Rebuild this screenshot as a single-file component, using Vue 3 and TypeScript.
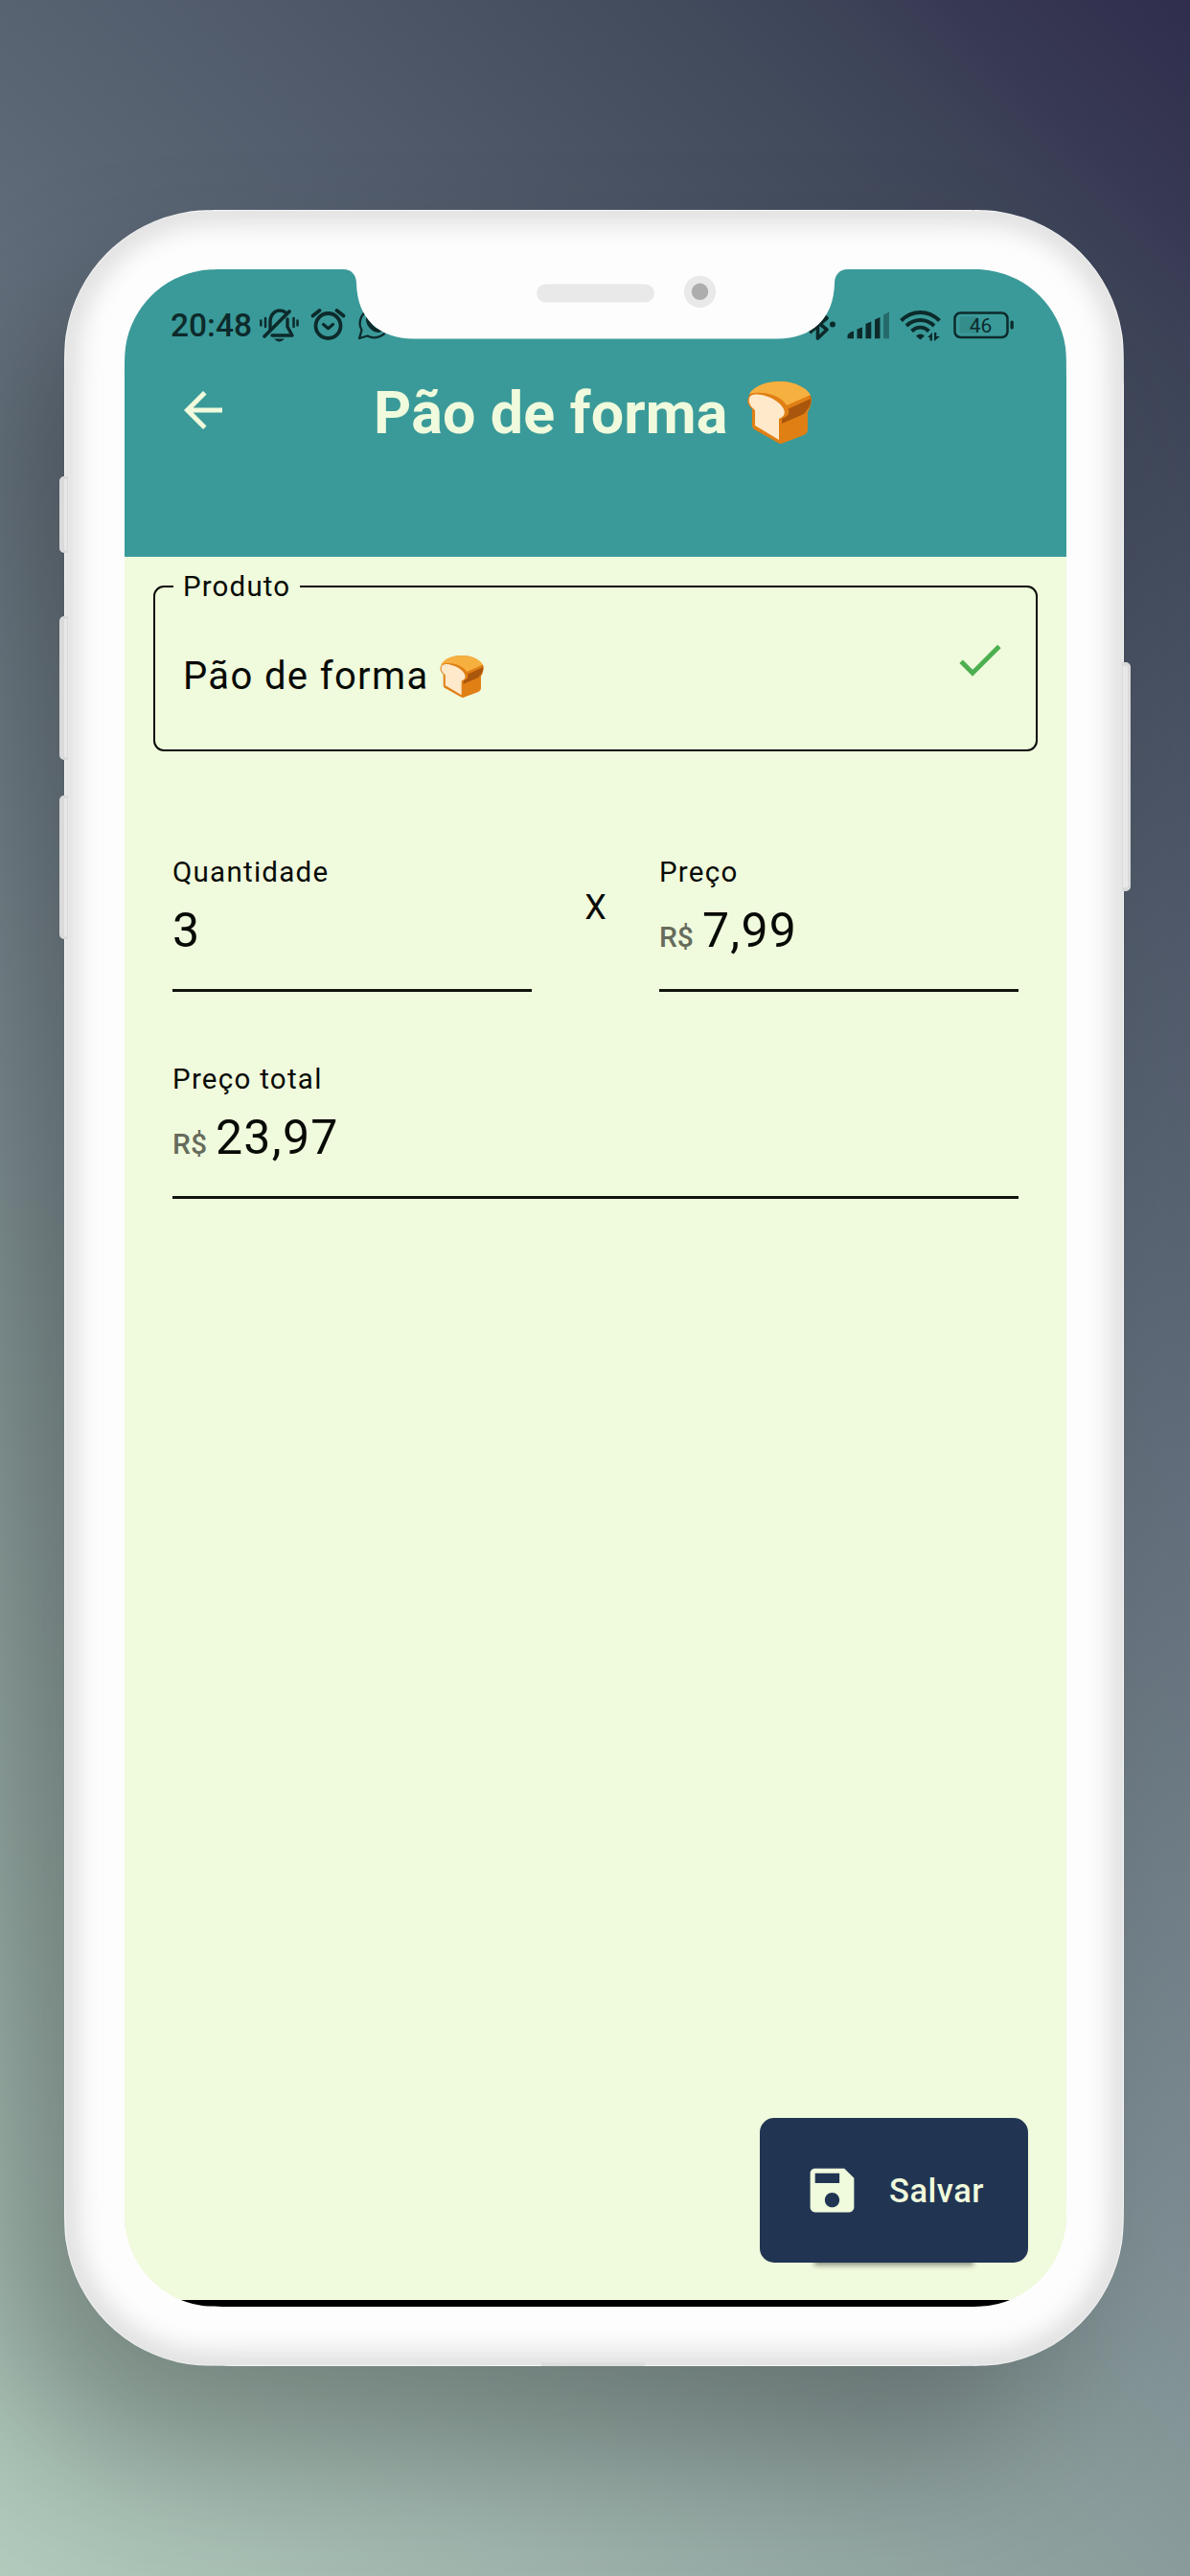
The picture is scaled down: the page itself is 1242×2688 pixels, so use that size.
<script setup lang="ts">
import { computed, ref } from 'vue'

interface Box {
  x: number
  y: number
  w: number
  h: number
}

// Rounded rectangle with smoothed (continuous curvature) corners
function smoothRect({ x, y, w, h }: Box, r: number, s: number): string {
  const rad = Math.PI / 180
  const p = (1 + s) * r
  const arc = Math.sin((45 - 45 * s) * rad) * r * Math.SQRT2
  const c = r * Math.tan((22.5 * s) * rad) * Math.cos(45 * s * rad)
  const d = c * Math.tan(45 * s * rad)
  const b = (p - arc - c - d) / 3
  const a = 2 * b
  return [
    `M${x + p} ${y}H${x + w - p}`,
    `c${a} 0 ${a + b} 0 ${a + b + c} ${d}a${r} ${r} 0 0 1 ${arc} ${arc}c${d} ${c} ${d} ${b + c} ${d} ${a + b + c}`,
    `V${y + h - p}`,
    `c0 ${a} 0 ${a + b} ${-d} ${a + b + c}a${r} ${r} 0 0 1 ${-arc} ${arc}c${-c} ${d} ${-(b + c)} ${d} ${-(a + b + c)} ${d}`,
    `H${x + p}`,
    `c${-a} 0 ${-(a + b)} 0 ${-(a + b + c)} ${-d}a${r} ${r} 0 0 1 ${-arc} ${-arc}c${-d} ${-c} ${-d} ${-(b + c)} ${-d} ${-(a + b + c)}`,
    `V${y + p}`,
    `c0 ${-a} 0 ${-(a + b)} ${d} ${-(a + b + c)}a${r} ${r} 0 0 1 ${arc} ${-arc}c${c} ${-d} ${b + c} ${-d} ${a + b + c} ${-d}Z`,
  ].join('')
}

const bodyPath = smoothRect({ x: 0, y: 0, w: 1106, h: 2250 }, 153, 0.2)
const screenPath = smoothRect({ x: 63, y: 62, w: 983, h: 2126 }, 95, 0.2)

const product = ref('Pão de forma')
const quantity = ref(3)
const price = ref(7.99)
const money = (v: number): string => v.toFixed(2).replace('.', ',')
const total = computed(() => money(quantity.value * price.value))
</script>

<template>
  <div class="stage">
    <svg width="0" height="0" class="defs">
      <symbol id="bread" viewBox="0 0 67 65">
        <path fill="#e07f14" d="M1 17C4 7 18 0 34 0c17 0 29 8 33 17 0 8-2 12-4 15v18c0 3-1 4-4 6L38 64q-3 2-6 0L9 51c-3-1-4-3-4-6V29C1 25-1 21 1 17Z" />
        <path fill="#aa560d" d="M42 27 66 15c1 7 0 11-4 15l-3 4-23 10v-5c5-2 8-4 7-9Z" />
        <path fill="#e07f14" d="M40 25 65 14l1 4-24 11Z" />
        <path fill="#f6b040" d="M2 13C8 4 20 0 34 0c16 0 28 7 32 14L41 25C36 16 19 9 2 13Z" />
        <path fill="#ffe9cb" d="M2 18c1-5 7-5 13-4 10 2 20 8 23 15 2 5 0 8-5 10v22L8 46V30C3 26 1 22 2 18Z" />
      </symbol>
    </svg>

    <div class="phone">
      <i class="key key-a"></i>
      <i class="key key-b"></i>
      <i class="key key-c"></i>
      <i class="key key-d"></i>

      <main class="screen">
        <header class="appbar">
          <div class="status">
            <div class="status-side">
              <span class="clock">20:48</span>
              <svg class="ic-bell" viewBox="270 320 44 40" width="44" height="40">
                <g fill="none" stroke="#0d2a2b" stroke-width="3.400" stroke-linecap="round" stroke-linejoin="round">
                  <path d="M282 343V336c0-8 5-12 10-12 3 0 5 1 6 2M300 333v8l5 9H284" />
                  <path d="M302 325 276 351" stroke-width="3.800" />
                  <path d="M272.300 334.500v5M277 332v9M306.500 332v9M310.500 334.500v5" stroke-width="2.500" />
                </g>
                <path fill="#0d2a2b" d="M286 353.500h11q-5.500 6-11 0Z" />
              </svg>
              <svg class="ic-alarm" viewBox="323 320 40 38" width="40" height="38">
                <g fill="none" stroke="#0d2a2b" stroke-linecap="round" stroke-linejoin="round">
                  <circle cx="342.500" cy="340" r="13" stroke-width="3.800" />
                  <path d="m337.500 338.500 5 4.200 5-4.200" stroke-width="3.200" />
                  <path d="m326.500 329.500 7-5.500M358.500 329.500l-7-5.500" stroke-width="3.800" />
                </g>
              </svg>
              <svg class="ic-chat" viewBox="372 320 40 38" width="40" height="38">
                <path fill="none" stroke="#0d2a2b" stroke-width="2.300" stroke-linejoin="round" d="m375 353 2.500-8.500a15 15 0 1 1 6 6Z" />
                <path fill="#0d2a2b" d="M383 329c4-2 6 5 4 7 2 4 4 5 7 7 3-4 8-1 7 1-8 9-23-5-18-15Z" />
              </svg>
            </div>
            <div class="status-side">
              <svg viewBox="840 320 34 38" width="34" height="38">
                <path fill="none" stroke="#0d2a2b" stroke-width="3.600" stroke-linejoin="round" d="m846 330 17 14-9.500 9V324l9.500 8-18 15" />
                <circle cx="869" cy="338.600" r="3" fill="#0d2a2b" />
              </svg>
              <svg class="ic-signal" viewBox="884 320 46 38" width="46" height="38">
                <g fill="#0d2a2b">
                  <path d="M884.500 350q2-4 6.500-4.500v7.800h-6.500ZM894.500 343.500l5.500-2v11.800h-5.500ZM903.500 338l5.800-2.500v17.800h-5.800ZM913 333.500l5.500-2.500v22.300H913Z" />
                  <path opacity=".42" d="m922 328.500 6-3v27.800h-6Z" />
                </g>
              </svg>
              <svg class="ic-wifi" viewBox="938 320 46 38" width="46" height="38">
                <g fill="none" stroke="#0d2a2b" stroke-width="4">
                  <path d="M940.500 334.500c11.500-11.500 28.500-11.500 40 0M946 340c8.500-8 20.500-8 29 0M951.500 345.500c5.500-5 12.500-5 18 0" />
                </g>
                <path fill="#0d2a2b" d="M956 350.500q4.500-4 9 0l-4.500 4Z" />
                <path fill="#0d2a2b" d="M968 352l5-5v8.500h-2.500V352ZM975 347h2.300v4h3.700l-6 5Z" />
              </svg>
              <svg class="ic-battery" viewBox="994 320 66 38" width="66" height="38">
                <rect x="996.500" y="326.500" width="55" height="25.500" rx="6" fill="none" stroke="#0d2a2b" stroke-width="2.500" />
                <rect x="1001.500" y="330.500" width="20" height="17" rx="3" fill="#0d2a2b" opacity=".12" />
                <rect x="1054.500" y="334.500" width="3.300" height="9" rx="1.500" fill="#0d2a2b" />
                <text x="1023.500" y="346.500" text-anchor="middle" class="pct">46</text>
              </svg>
            </div>
          </div>
          <div class="toolbar">
            <svg class="back" viewBox="0 0 24 24" width="60" height="60">
              <path fill="#f0fadc" d="M20 11H7.830l5.590-5.590L12 4l-8 8 8 8 1.410-1.410L7.830 13H20v-2z" />
            </svg>
            <h1 class="title">{{ product }}</h1>
            <svg class="bread-lg"><use href="#bread" /></svg>
          </div>
        </header>

        <section class="form">
          <fieldset class="product">
            <legend>Produto</legend>
            <span class="product-name">{{ product }}</span>
            <svg class="bread-sm"><use href="#bread" /></svg>
            <svg class="check" viewBox="0 0 24 24" width="59" height="59">
              <path fill="#4caf50" d="M9 16.170 4.830 12l-1.420 1.410L9 19 21 7l-1.410-1.410z" />
            </svg>
          </fieldset>

          <div class="row">
            <label class="field">
              <span class="label">Quantidade</span>
              <span class="value"><b>{{ quantity }}</b></span>
            </label>
            <span class="times">X</span>
            <label class="field">
              <span class="label">Preço</span>
              <span class="value"><small>R$</small><b>{{ money(price) }}</b></span>
            </label>
          </div>
          <div class="row">
            <label class="field">
              <span class="label">Preço total</span>
              <span class="value"><small>R$</small><b>{{ total }}</b></span>
            </label>
          </div>

          <button class="save" type="button">
            <svg viewBox="0 0 24 24" width="61" height="61">
              <path fill="#f0fadc" d="M17 3H5c-1.110 0-2 .9-2 2v14c0 1.100.89 2 2 2h14c1.100 0 2-.9 2-2V7l-4-4zm-5 16c-1.660 0-3-1.340-3-3s1.340-3 3-3 3 1.340 3 3-1.340 3-3 3zm3-10H5V5h10v4z" />
            </svg>
            <span>Salvar</span>
          </button>
        </section>
        <div class="navbar"></div>
      </main>

      <svg class="frame" viewBox="0 0 1106 2250" width="1106" height="2250">
        <defs>
          <filter id="soft" x="-5%" y="-5%" width="110%" height="110%">
            <feGaussianBlur stdDeviation="13" />
          </filter>
          <mask id="shell" maskUnits="userSpaceOnUse" x="-2" y="-2" width="1110" height="2254">
            <path :d="bodyPath" fill="#fff" />
            <path :d="screenPath" fill="#000" />
            <path fill="#fff" d="M291 60v2c9 0 14 6 14 15 1 36 23 57.500 60 57.500H744c37 0 59-21.500 60-57.500 0-9 5-15 14-15v-2Z" />
          </mask>
        </defs>
        <g mask="url(#shell)">
          <rect width="1106" height="2250" fill="#fdfdfd" />
          <path :d="bodyPath" fill="none" stroke="#dadada" stroke-width="26" filter="url(#soft)" />
          <path :d="bodyPath" fill="none" stroke="#fff" stroke-opacity=".6" stroke-width="2" />
          <rect x="498" y="2246" width="108" height="4" fill="#dedede" />
        </g>
        <rect x="493" y="77.500" width="123" height="19" rx="9.500" fill="#e9e9e9" />
        <circle cx="663.500" cy="85.300" r="16.600" fill="#e9e9e9" />
        <circle cx="663.500" cy="85.300" r="8.700" fill="#adadad" />
      </svg>
    </div>
  </div>
</template>

<style>
body {
  margin: 0;
}
</style>

<style scoped>
.stage {
  box-sizing: border-box;
  width: 1242px;
  height: 2688px;
  padding: 219px 69px 0 67px;
  overflow: hidden;
  background: linear-gradient(225deg, #2f2f4d 0%, #373853 6%, #3d4458 10%, #464f60 17%, #5b6675 34%, #7f8f94 61%, #8a9c9b 69%, #b1cabc 100%);
  font-family: Roboto, 'Liberation Sans', sans-serif;
  color: #070a06;
}
.defs {
  position: absolute;
}
.phone {
  position: relative;
  box-sizing: border-box;
  width: 1106px;
  height: 2250px;
  padding: 62px 60px 0 63px;
  border-radius: 170px;
  box-shadow: -62px 92px 150px -4px rgba(0, 0, 0, 0.28);
}
.frame {
  position: absolute;
  inset: 0;
}
.key {
  position: absolute;
  box-sizing: border-box;
  left: -5px;
  width: 9px;
  background: #e8e8e8;
  border: 3px solid #dadada;
  border-left-width: 5px;
  border-right-width: 1px;
  border-radius: 5px 0 0 5px;
  z-index: 1;
}
.key-a { top: 278px; height: 80px; }
.key-b { top: 424px; height: 150px; }
.key-c { top: 611px; height: 150px; }
.key-d {
  top: 472px;
  left: 1104px;
  height: 239px;
  border-width: 4px 3px 4px 1px;
  border-radius: 0 5px 5px 0;
}
.screen {
  display: flex;
  flex-direction: column;
  width: 983px;
  height: 2126px;
  border-radius: 90px;
  overflow: hidden;
  background: #f0fadc;
}
.appbar {
  flex: none;
  height: 299.500px;
  background: #3a9a99;
}
.status {
  display: flex;
  justify-content: space-between;
  height: 78px;
  box-sizing: border-box;
  padding: 39px 53px 0 48px;
}
.status-side {
  display: flex;
}
.clock {
  width: 92px;
  line-height: 40px;
  font-size: 33.500px;
  font-weight: 500;
  color: #0d2a2b;
}
.ic-alarm { margin-left: 9px; }
.ic-chat { margin-left: 9px; }
.ic-signal { margin-left: 10px; }
.ic-wifi { margin-left: 8px; }
.ic-battery { margin-left: 10px; }
.pct {
  font-size: 21px;
  fill: #0d2a2b;
}
.toolbar {
  display: flex;
  align-items: flex-start;
  height: 74px;
  padding: 39px 0 0 52px;
}
.title {
  margin: 3px 0 0 148px;
  line-height: 60px;
  font-size: 61px;
  font-weight: 700;
  letter-spacing: 0.150px;
  color: #f0fadc;
  white-space: nowrap;
}
.bread-lg {
  width: 67px;
  height: 65px;
  margin: 0 0 0 20px;
}
.form {
  display: flex;
  flex-direction: column;
  flex: 1;
  padding: 13px 30px 0;
}
.product {
  display: flex;
  align-items: flex-start;
  box-sizing: border-box;
  width: 923px;
  height: 190px;
  margin: 0;
  padding: 52px 29px 0 29px;
  border: 2.500px solid #070a06;
  border-radius: 11px;
}
.product legend {
  box-sizing: border-box;
  width: 132px;
  margin-left: -10px;
  padding: 0 10px;
  line-height: 36px;
  font-size: 29.500px;
  letter-spacing: 1.150px;
}
.product-name {
  line-height: 48px;
  font-size: 40px;
  letter-spacing: 1.350px;
}
.bread-sm {
  width: 46px;
  height: 44px;
  margin: 2px 0 0 11px;
}
.check {
  margin: -23px 0 0 auto;
}
.row {
  display: flex;
  justify-content: space-between;
  height: 215.500px;
  margin: 0 20px;
}
.product + .row {
  margin-top: 108.500px;
}
.field {
  display: flex;
  flex-direction: column;
  box-sizing: border-box;
  width: 375px;
  height: 143px;
  border-bottom: 3px solid #10140e;
}
.field:only-child {
  width: 883px;
}
.label {
  line-height: 36px;
  font-size: 29.500px;
  letter-spacing: 1.270px;
}
.value {
  display: flex;
  align-items: baseline;
  line-height: 60px;
  margin-top: 13px;
}
.value b {
  font-size: 50px;
  font-weight: 400;
  letter-spacing: 1.300px;
}
.value small {
  margin-right: 9px;
  font-size: 30px;
  font-weight: 500;
  color: #666b5c;
}
.times {
  line-height: 42px;
  margin-top: 34px;
  font-size: 36px;
}
.save {
  display: flex;
  align-items: center;
  box-sizing: border-box;
  width: 280px;
  height: 151px;
  margin: auto 10px 39px auto;
  padding: 0 0 0 45px;
  border: 0;
  border-radius: 15px;
  background: #213553;
  box-shadow: 0 60px 5px -57px rgba(0, 0, 0, 0.4);
  color: #f0fadc;
  font: 500 34.500px/40px Roboto, 'Liberation Sans', sans-serif;
  letter-spacing: 0.500px;
}
.save span {
  margin-left: 29px;
}
.navbar {
  flex: none;
  height: 7px;
  background: #000;
}
</style>
